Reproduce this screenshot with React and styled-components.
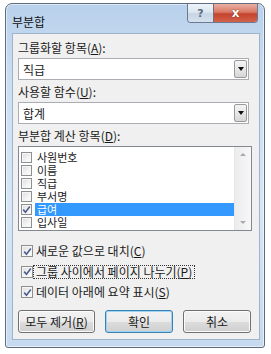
import React from 'react';
import styled, { createGlobalStyle } from 'styled-components';

const GlobalStyle = createGlobalStyle`
  html, body { margin: 0; padding: 0; background: #fff; }
  body {
    font-family: "Noto Sans CJK KR", "Noto Sans", sans-serif;
    font-size: 12px;
    color: #1a1a1a;
  }
`;

const Window = styled.div`
  margin: 3px 0 0 5px;
  width: 260px;
  height: 345px;
  box-sizing: border-box;
  border: 1px solid #5d6c7e;
  border-radius: 7px 7px 3px 3px;
  background: linear-gradient(180deg, #b9d1ec 0%, #cddff3 25%, #d8e6f5 60%, #c6daef 100%);
  box-shadow: inset 0 0 0 1px rgba(255, 255, 255, 0.55);
  display: flex;
  flex-direction: column;
  padding: 0 4px 7px 6px;
`;

const TitleBar = styled.div`
  height: 29px;
  display: flex;
  justify-content: space-between;
  align-items: flex-start;
`;

const Title = styled.div`
  padding-top: 10px;
  line-height: 16px;
  color: #111;
`;

const Controls = styled.div`
  display: flex;
  margin-right: 2px;
  border: 1px solid #6b7a8f;
  border-top: none;
  border-radius: 0 0 4px 4px;
  overflow: hidden;
  height: 18px;
`;

const CtrlButton = styled.div`
  width: ${p => (p.$close ? '43px' : '25px')};
  display: flex;
  align-items: center;
  justify-content: center;
  background: ${p =>
    p.$close
      ? 'linear-gradient(180deg, #eab0a4 0%, #d97a66 45%, #c6432d 55%, #d2624c 100%)'
      : 'linear-gradient(180deg, #eef3f9 0%, #dce6f1 45%, #c7d5e5 55%, #d5e1ee 100%)'};
  border-left: ${p => (p.$close ? '1px solid #7b6a70' : 'none')};
  color: ${p => (p.$close ? '#fff' : '#5c6a7a')};
  font-family: "DejaVu Sans", sans-serif;
  font-weight: bold;
  font-size: ${p => (p.$close ? '12px' : '11px')};
  text-shadow: ${p => (p.$close ? '0 0 1px #7a2a1e, 0 0 1px #7a2a1e' : 'none')};
`;

const Client = styled.div`
  flex: 1;
  border: 1px solid #9fb3ca;
  background: #f0f0f0;
  padding: 6px 0 0 5px;
  display: flex;
  flex-direction: column;
`;

const Label = styled.div`
  line-height: 16px;
  margin-top: ${p => p.$top || 0}px;
  margin-bottom: ${p => p.$bottom || 0}px;
`;

const Combo = styled.div`
  width: 231px;
  height: 22px;
  box-sizing: border-box;
  border: 1px solid #abadb3;
  background: #fff;
  display: flex;
  align-items: center;
  justify-content: space-between;
  padding: 0 1px 0 4px;
`;

const ComboArrow = styled.div`
  width: 13px;
  height: 18px;
  box-sizing: border-box;
  border: 1px solid #9a9a9a;
  border-radius: 2px;
  background: linear-gradient(180deg, #f4f4f4 0%, #e8e8e8 50%, #d6d6d6 100%);
  display: flex;
  align-items: center;
  justify-content: center;
  &::after {
    content: '';
    border-left: 3px solid transparent;
    border-right: 3px solid transparent;
    border-top: 4px solid #111;
  }
`;

const ListBox = styled.div`
  width: 234px;
  height: 85px;
  box-sizing: border-box;
  border: 1px solid #828790;
  background: #fff;
  display: flex;
`;

const Items = styled.div`
  flex: 1;
  padding: 4px 0 0 2px;
`;

const Item = styled.div`
  height: 13px;
  display: flex;
  align-items: center;
`;

const ItemText = styled.div`
  flex: 1;
  height: 13px;
  line-height: 13px;
  font-size: 11px;
  padding-left: 2px;
  margin-left: 3px;
  background: ${p => (p.$selected ? '#3399ff' : 'transparent')};
  color: ${p => (p.$selected ? '#fff' : '#1a1a1a')};
`;

const ScrollBar = styled.div`
  width: 16px;
  border-left: 1px solid #e6e6e6;
  background: linear-gradient(90deg, #ececec, #f7f7f7);
  display: flex;
  flex-direction: column;
  justify-content: space-between;
  align-items: center;
  padding: 6px 0;
`;

const ScrollArrow = styled.div`
  border-left: 3px solid transparent;
  border-right: 3px solid transparent;
  ${p => (p.$down ? 'border-top: 3px solid #a8a8a8;' : 'border-bottom: 3px solid #a8a8a8;')}
`;

const Box = styled.span`
  width: ${p => p.$size}px;
  height: ${p => p.$size}px;
  box-sizing: border-box;
  border: 1px solid #8e8f8f;
  background: linear-gradient(135deg, #dcdcdc 0%, #f4f4f4 60%, #ffffff 100%);
  box-shadow: inset 0 0 0 1px #f6f6f6;
  display: flex;
  align-items: center;
  justify-content: center;
  flex-shrink: 0;
`;

const Options = styled.div`
  margin-top: 10px;
  display: flex;
  flex-direction: column;
`;

const OptionRow = styled.div`
  height: 20.5px;
  display: flex;
  align-items: center;
  padding-left: 3px;
`;

const OptionText = styled.span`
  line-height: 12px;
  padding: 0 2px;
  border: 1px ${p => (p.$focus ? 'dotted #333' : 'solid transparent')};
`;

const ButtonRow = styled.div`
  margin-top: 7px;
  display: flex;
  gap: 10px;
`;

const Button = styled.button`
  width: ${p => p.$w}px;
  height: 23px;
  box-sizing: border-box;
  font-family: inherit;
  font-size: 12px;
  color: #1a1a1a;
  padding: 0;
  border-radius: 3px;
  border: 1px solid ${p => (p.$primary ? '#3c7fb1' : '#707070')};
  background: linear-gradient(180deg, #f2f2f2 0%, #ebebeb 50%, #dddddd 51%, #cfcfcf 100%);
  box-shadow: inset 0 0 0 1px ${p => (p.$primary ? '#9cd4f5' : '#fbfbfb')};
`;

const U = styled.u`
  text-underline-offset: 1px;
`;

const Check = () => (
  <svg width="9" height="9" viewBox="0 0 9 9">
    <path d="M1.2 4.6 L3.5 7.2 L7.8 1.4" fill="none" stroke="#4c5f8f" strokeWidth="1.6" />
  </svg>
);

const items = ['사원번호', '이름', '직급', '부서명', '급여', '입사일'];

export default function App() {
  return (
    <>
      <GlobalStyle />
      <Window>
        <TitleBar>
          <Title>부분합</Title>
          <Controls>
            <CtrlButton>?</CtrlButton>
            <CtrlButton $close>x</CtrlButton>
          </Controls>
        </TitleBar>
        <Client>
          <Label $bottom={2}>그룹화할 항목(<U>A</U>):</Label>
          <Combo>
            <span>직급</span>
            <ComboArrow />
          </Combo>
          <Label $top={4} $bottom={2}>사용할 함수(<U>U</U>):</Label>
          <Combo>
            <span>합계</span>
            <ComboArrow />
          </Combo>
          <Label $top={4} $bottom={2}>부분합 계산 항목(<U>D</U>):</Label>
          <ListBox>
            <Items>
              {items.map(name => (
                <Item key={name}>
                  <Box $size={11}>{name === '급여' && <Check />}</Box>
                  <ItemText $selected={name === '급여'}>{name}</ItemText>
                </Item>
              ))}
            </Items>
            <ScrollBar>
              <ScrollArrow />
              <ScrollArrow $down />
            </ScrollBar>
          </ListBox>
          <Options>
            <OptionRow>
              <Box $size={12}><Check /></Box>
              <OptionText>새로운 값으로 대치(<U>C</U>)</OptionText>
            </OptionRow>
            <OptionRow>
              <Box $size={12}><Check /></Box>
              <OptionText $focus>그룹 사이에서 페이지 나누기(<U>P</U>)</OptionText>
            </OptionRow>
            <OptionRow>
              <Box $size={12}><Check /></Box>
              <OptionText>데이터 아래에 요약 표시(<U>S</U>)</OptionText>
            </OptionRow>
          </Options>
          <ButtonRow>
            <Button $w={77}>모두 제거(<U>R</U>)</Button>
            <Button $w={68} $primary>확인</Button>
            <Button $w={68}>취소</Button>
          </ButtonRow>
        </Client>
      </Window>
    </>
  );
}
